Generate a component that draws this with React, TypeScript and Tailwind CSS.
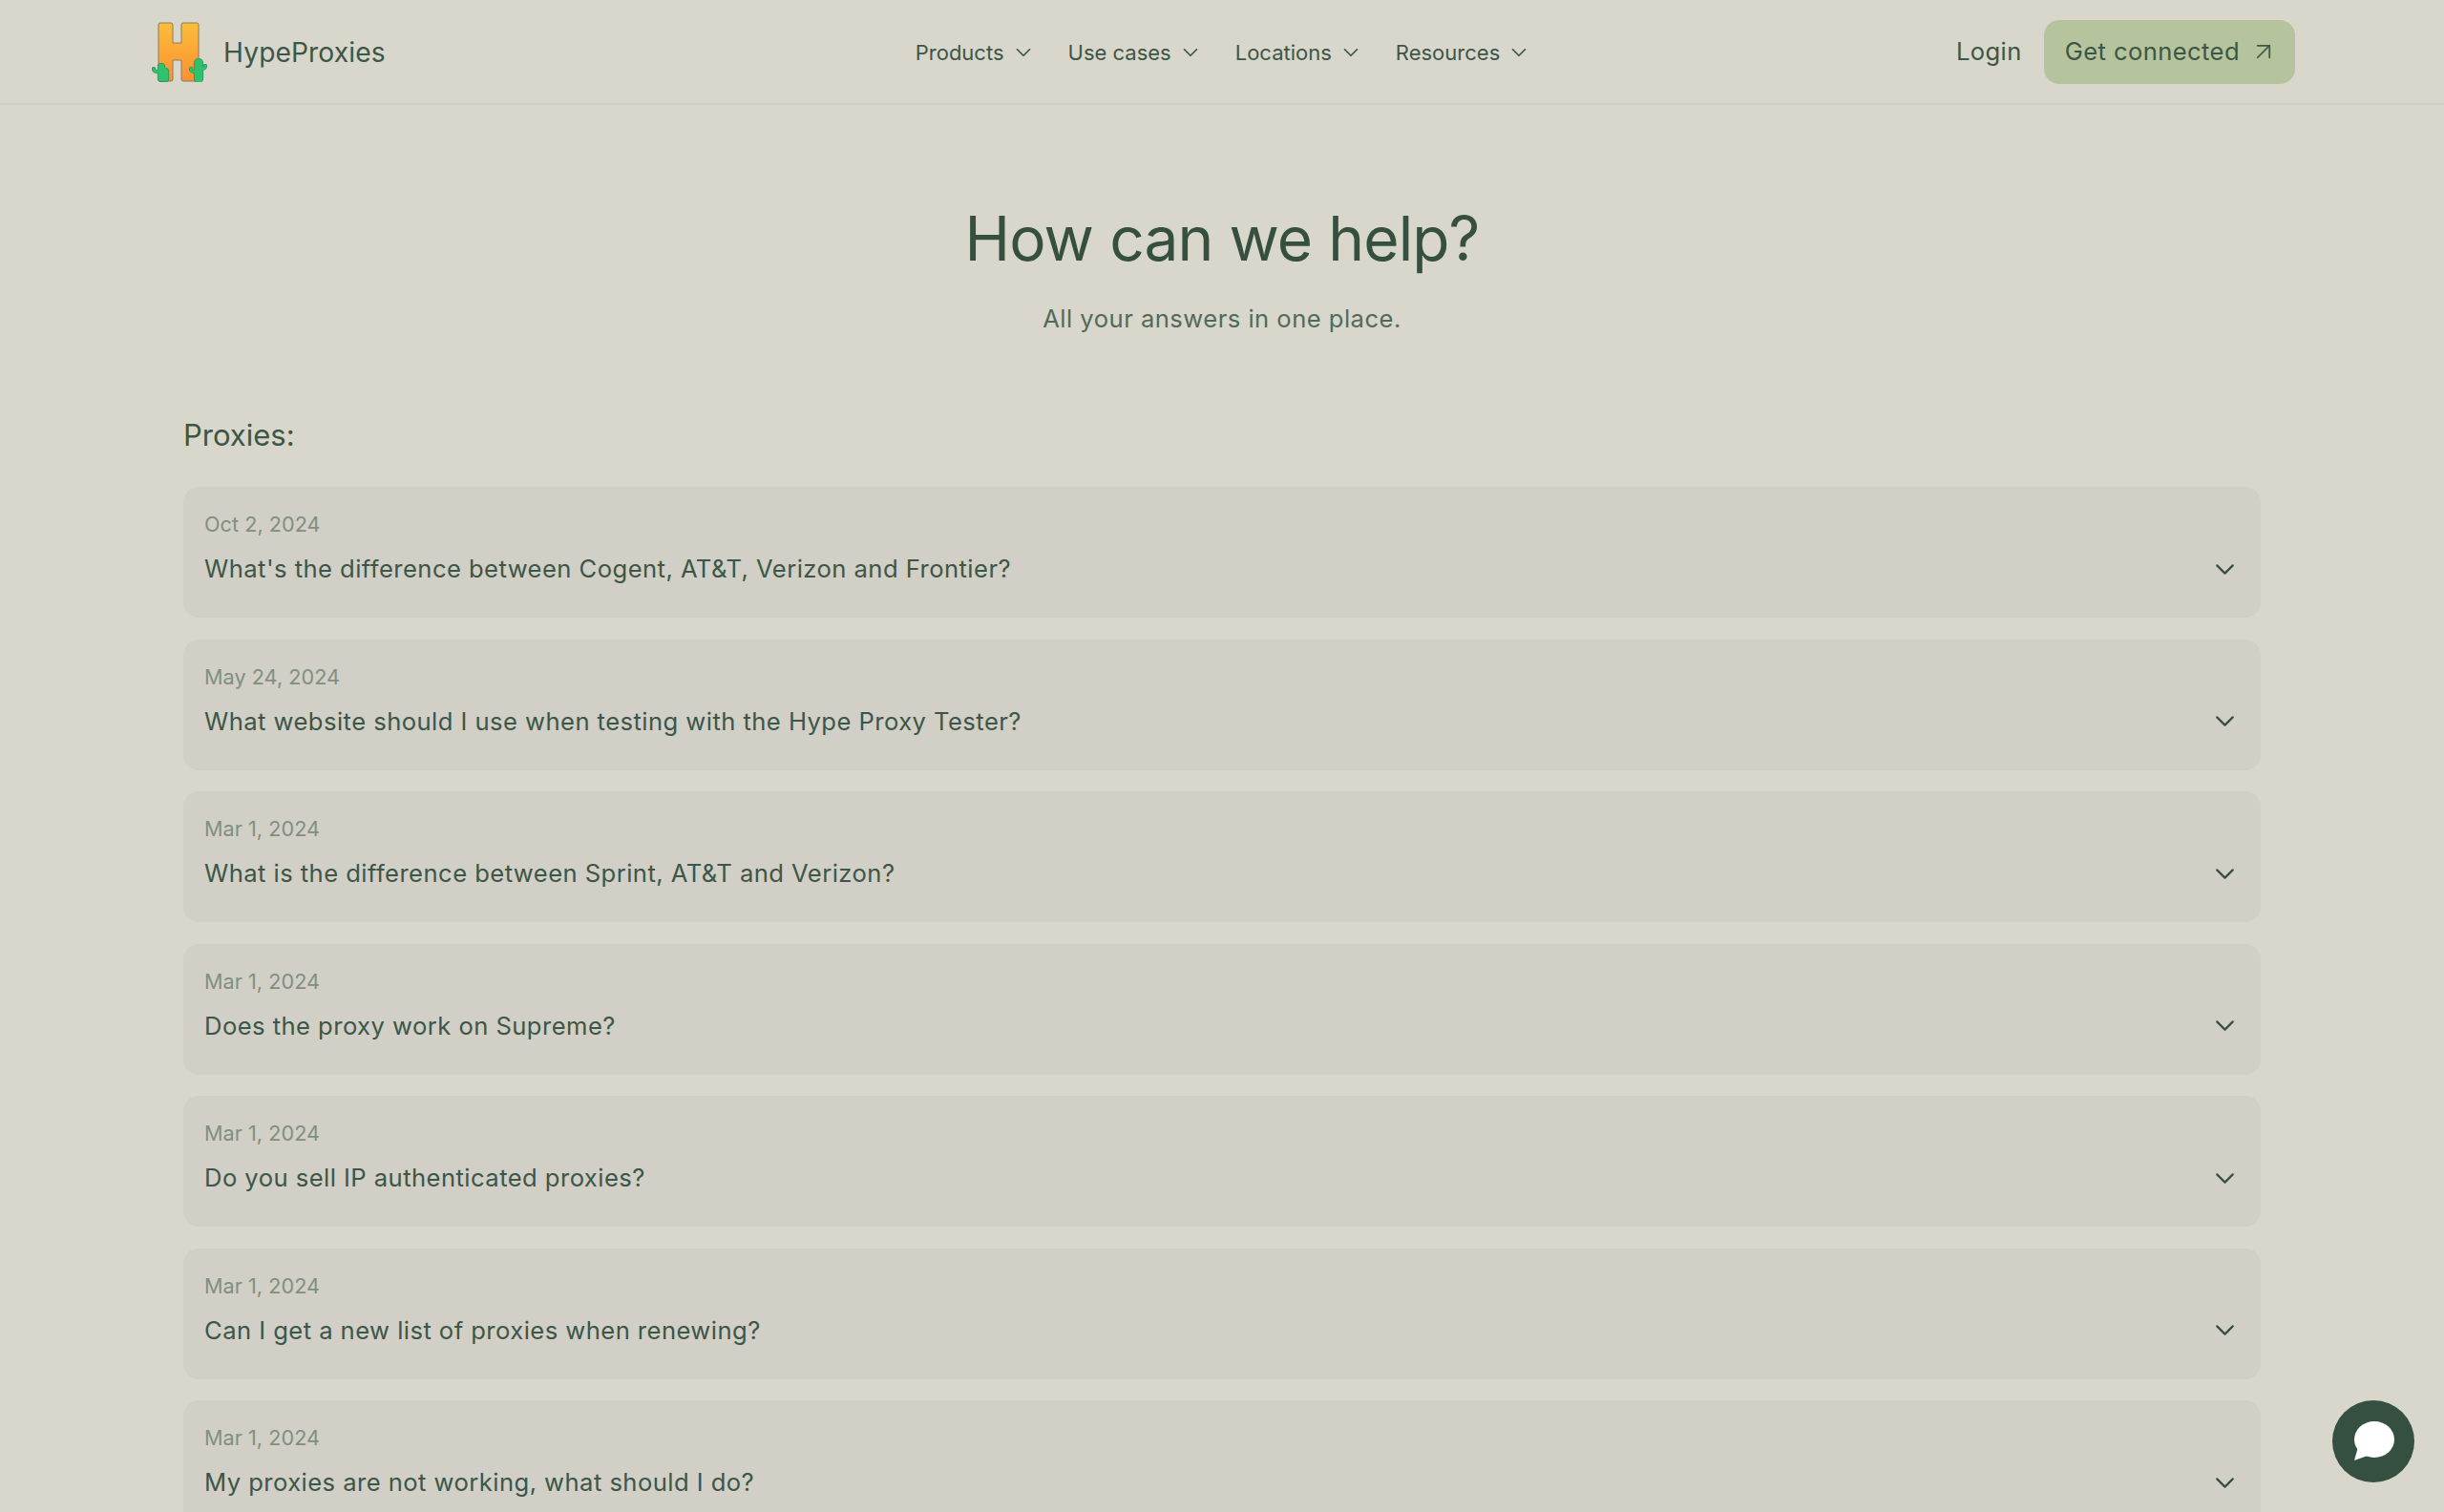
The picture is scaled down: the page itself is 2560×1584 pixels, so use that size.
import React from 'react';
import { ChevronDown, ArrowUpRight } from 'lucide-react';

const NAV_ITEMS = ['Products', 'Use cases', 'Locations', 'Resources'];

const FAQS = [
  { date: 'Oct 2, 2024', question: "What's the difference between Cogent, AT&T, Verizon and Frontier?" },
  { date: 'May 24, 2024', question: 'What website should I use when testing with the Hype Proxy Tester?' },
  { date: 'Mar 1, 2024', question: 'What is the difference between Sprint, AT&T and Verizon?' },
  { date: 'Mar 1, 2024', question: 'Does the proxy work on Supreme?' },
  { date: 'Mar 1, 2024', question: 'Do you sell IP authenticated proxies?' },
  { date: 'Mar 1, 2024', question: 'Can I get a new list of proxies when renewing?' },
  { date: 'Mar 1, 2024', question: 'My proxies are not working, what should I do?' },
];

const Cactus = ({ body, arms, width }: { body: string; arms: string; width: number }) => (
  <g fill="none" strokeLinecap="round" strokeLinejoin="round">
    <path d={body} stroke="#2f7f55" strokeWidth={width + 1.2} />
    <path d={arms} stroke="#2f7f55" strokeWidth={4.2} />
    <path d={arms} stroke="#2fc16e" strokeWidth={3} />
    <path d={body} stroke="#2fc16e" strokeWidth={width} />
  </g>
);

const Logo = () => (
  <svg width="58" height="63" viewBox="0 0 58 63" className="shrink-0">
    <defs>
      <linearGradient id="logoFill" x1="0" y1="0" x2="0" y2="1">
        <stop offset="0" stopColor="#fbbd3c" />
        <stop offset="1" stopColor="#fd9031" />
      </linearGradient>
    </defs>
    <path
      d="M9 1h11a2 2 0 0 1 2 2v19h9V3a2 2 0 0 1 2-2h14a2 2 0 0 1 2 2v57a2 2 0 0 1-2 2H33a2 2 0 0 1-2-2V40h-9v20a2 2 0 0 1-2 2H9a2 2 0 0 1-2-2V3a2 2 0 0 1 2-2z"
      fill="url(#logoFill)"
      stroke="#8b7a63"
      strokeWidth="1"
    />
    <Cactus body="M10 47V59M14 52V59" arms="M8 52H5a3 3 0 0 1-3-3" width={7} />
    <Cactus body="M49 43V59" arms="M46 52h-2a3 3 0 0 1-3-3M52 49h1a3 3 0 0 0 3-3" width={9} />
  </svg>
);

const FaqCard = ({ date, question }: { date: string; question: string }) => (
  <div className="h-[137px] shrink-0 rounded-[16px] bg-[#d2cfc6] pl-[22px] pr-[29px] pt-[23px]">
    <p className="text-[21.6px] leading-[32px] tracking-[0.05px] text-[#7f9080]">{date}</p>
    <div className="mt-[13px] flex h-[36px] items-center justify-between">
      <p className="text-[25.6px] leading-[36px] tracking-[0.45px] text-[#3c5647]">{question}</p>
      <ChevronDown size={33} strokeWidth={1.6} className="-mr-[8px] text-[#35503f]" />
    </div>
  </div>
);

export default function App() {
  return (
    <div className="h-screen overflow-hidden bg-[#d9d7cb] font-['Inter',sans-serif] text-[#3c5647]">
      {/* Header */}
      <header className="flex h-[110px] items-center justify-between border-b-2 border-[#cfcdc1] pl-[159px] pr-[156px]">
        <div className="flex w-[500px] items-center gap-[17px]">
          <Logo />
          <span className="pt-[2px] text-[28.2px] tracking-[0.1px]">HypeProxies</span>
        </div>
        <nav className="flex items-center gap-[34px] pt-[2px]">
          {NAV_ITEMS.map((item) => (
            <div key={item} className="flex items-center gap-[7px] text-[22px]">
              {item}
              <ChevronDown size={26} strokeWidth={1.6} />
            </div>
          ))}
        </nav>
        <div className="flex w-[500px] items-center justify-end gap-[23px]">
          <span className="text-[25.6px] tracking-[0.4px]">Login</span>
          <button className="flex h-[67px] items-center gap-[18px] rounded-[16px] bg-[#b5c49c] pl-[22px] pr-[26px] text-[25.6px] tracking-[0.4px]">
            Get connected
            <ArrowUpRight size={30} strokeWidth={1.4} className="-mx-[8px]" />
          </button>
        </div>
      </header>

      {/* Title */}
      <div className="flex flex-col items-center pt-[105px]">
        <h1 className="text-[64px] leading-[70px] tracking-[-0.9px] text-[#35503f]">How can we help?</h1>
        <p className="mt-[31px] text-[25.6px] leading-[36px] tracking-[0.47px] text-[#526a5a]">All your answers in one place.</p>
      </div>

      {/* FAQ list */}
      <main className="mx-[192px] mt-[84px]">
        <h2 className="text-[31px] leading-[40px]">Proxies:</h2>
        <div className="mt-[34px] flex flex-col gap-[22.5px]">
          {FAQS.map((faq) => (
            <FaqCard key={faq.question} date={faq.date} question={faq.question} />
          ))}
        </div>
      </main>

      {/* Chat launcher */}
      <button className="fixed bottom-[31px] right-[31px] flex h-[86px] w-[86px] items-center justify-center rounded-full bg-[#355040]">
        <svg width="44" height="42" viewBox="0 0 44 42">
          <ellipse cx="23" cy="19" rx="21" ry="19" fill="#ffffff" />
          <path d="M6 27 L2 41 L16 36 Z" fill="#ffffff" />
        </svg>
      </button>
    </div>
  );
}
